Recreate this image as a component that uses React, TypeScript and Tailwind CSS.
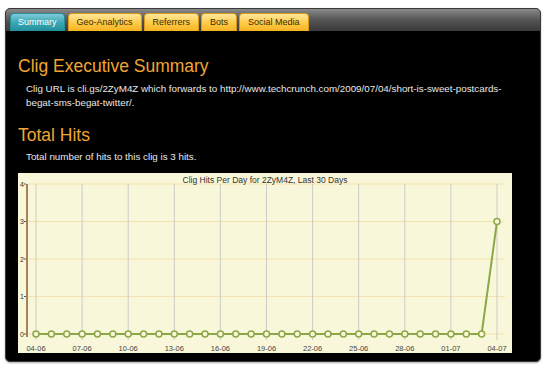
import * as React from "react";

const tabs = ["Summary", "Geo-Analytics", "Referrers", "Bots", "Social Media"];
const xLabels = ["04-06", "07-06", "10-06", "13-06", "16-06", "19-06", "22-06", "25-06", "28-06", "01-07", "04-07"];

function HitsChart() {
  // plot geometry, relative to the chart box (494 x 180)
  const x0 = 18;
  const x1 = 479;
  const yFor = (v: number) => 161 - v * 37.5;
  const data = Array.from({ length: 31 }, (_, i) => (i === 30 ? 3 : 0));
  const step = (x1 - x0) / 30;
  const pts = data.map((v, i) => [x0 + i * step, yFor(v)] as const);

  return (
    <div className="relative w-[494px] h-[180px] bg-[#f9f7d9]">
      <div className="absolute top-[1px] left-0 right-0 text-center text-[8.5px] leading-[12px] text-[#333]">
        Clig Hits Per Day for 2ZyM4Z, Last 30 Days
      </div>
      <svg width="494" height="180" className="block">
        {[0, 1, 2, 3, 4].map((v) => (
          <line key={v} x1="10" x2="487" y1={yFor(v)} y2={yFor(v)} stroke="#f3e2b0" strokeWidth="1" />
        ))}
        {xLabels.map((_, i) => {
          const x = x0 + i * step * 3;
          return <line key={i} x1={x} x2={x} y1="11" y2="167" stroke="#c9ccc4" strokeWidth="1" />;
        })}
        <line x1="9" x2="9" y1="11" y2="164" stroke="#a9805a" strokeWidth="2" />
        {[0, 1, 2, 3, 4].map((v) => (
          <g key={v}>
            <line x1="6" x2="8" y1={yFor(v)} y2={yFor(v)} stroke="#555" strokeWidth="1" />
            <text x="4" y={yFor(v) + 2.5} fontSize="7" fill="#333" textAnchor="middle" fontFamily="Liberation Sans, sans-serif">
              {v}
            </text>
          </g>
        ))}
        <polyline points={pts.map((p) => p.join(",")).join(" ")} fill="none" stroke="#8ba848" strokeWidth="2" />
        {pts.map((p, i) => (
          <circle key={i} cx={p[0]} cy={p[1]} r="3" fill="#f9f7d9" stroke="#8ba848" strokeWidth="1.5" />
        ))}
        {xLabels.map((l, i) => (
          <text key={l} x={x0 + i * step * 3} y="178" fontSize="7.5" fill="#444" textAnchor="middle" fontFamily="Liberation Sans, sans-serif">
            {l}
          </text>
        ))}
      </svg>
    </div>
  );
}

export default function App() {
  return (
    <div className="w-[547px] h-[367px] bg-white pt-[8px] pl-[5px]" style={{ fontFamily: "'Liberation Sans', Arial, sans-serif" }}>
      <div className="w-[536px] h-[354px] bg-black rounded-[5px] border border-[#3a3a3a] shadow-[0_1px_2px_rgba(0,0,0,0.35)] overflow-hidden">
        <div className="h-[22px] flex items-end gap-[2px] pl-[4px] bg-gradient-to-b from-[#8a8a8a] via-[#555] to-[#3a3a3a]">
          {tabs.map((t, i) => (
            <div
              key={t}
              className={
                i === 0
                  ? "h-[18px] px-[7px] mr-[1px] flex items-center rounded-t-[4px] text-[9px] text-white bg-gradient-to-b from-[#7ccdd8] via-[#3aa8b6] to-[#238f9d] border border-b-0 border-[#2a8a96]"
                  : "h-[18px] px-[8px] flex items-center rounded-t-[4px] text-[9px] text-[#3a2a00] bg-gradient-to-b from-[#ffe79a] via-[#ffcc4a] to-[#f6b21e] border border-b-0 border-[#d99a18]"
              }
            >
              {t}
            </div>
          ))}
        </div>
        <div className="pl-[12px] pt-[24px]">
          <h1 className="text-[17.5px] leading-[22px] text-[#f2a533]">Clig Executive Summary</h1>
          <p className="mt-[5px] pl-[8px] w-[500px] text-[9.8px] leading-[14px] text-[#e8e8e8]">
            Clig URL is cli.gs/2ZyM4Z which forwards to http://www.techcrunch.com/2009/07/04/short-is-sweet-postcards-begat-sms-begat-twitter/.
          </p>
          <h2 className="mt-[14px] text-[17.5px] leading-[22px] text-[#f2a533]">Total Hits</h2>
          <p className="mt-[4px] pl-[8px] text-[9.8px] leading-[14px] text-[#e8e8e8]">Total number of hits to this clig is 3 hits.</p>
          <div className="mt-[9px]">
            <HitsChart />
          </div>
        </div>
      </div>
    </div>
  );
}
